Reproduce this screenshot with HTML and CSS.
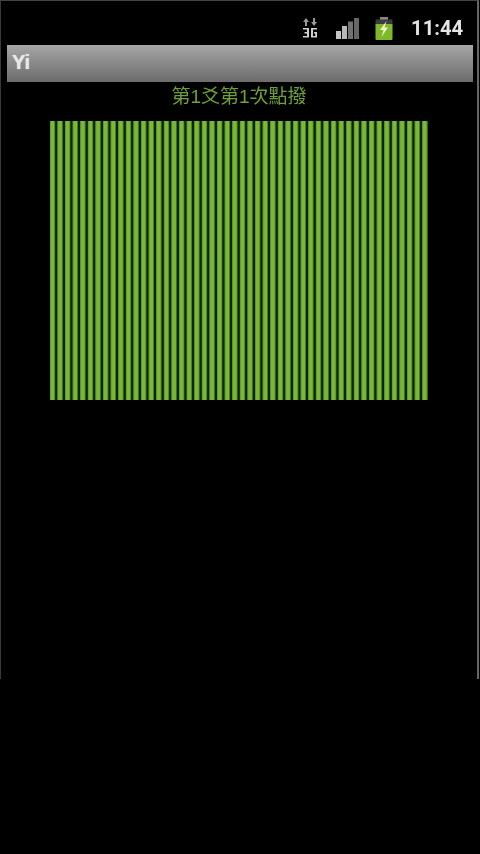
FILE: index.html
```html
<!DOCTYPE html>
<html lang="zh-Hant">
<head>
<meta charset="utf-8">
<title>Yi</title>
<link rel="stylesheet" href="styles.css">
</head>
<body>
<div class="screen">
  <div class="status">
    <svg class="ico-3g" width="16" height="20" viewBox="0 0 16 20">
      <path d="M4 0 L7 4 H5 V8 H3 V4 H1 Z M12 8 L15 4 H13 V0 H11 V4 H9 Z" fill="#9a9a9a"/>
      <path d="M1 10 H7 V19.5 H1 V18 H5 V15.5 H2.5 V14 H5 V11.5 H1 Z M9 10 H15 V11.5 H11 V18 H13.2 V15.5 H12 V14 H15 V19.5 H9 Z" fill="#cfcfcf"/>
    </svg>
    <svg class="ico-signal" width="23" height="21" viewBox="0 0 23 21">
      <rect x="0" y="13" width="5" height="8" fill="#c4c4c4"/>
      <rect x="6" y="8" width="5" height="13" fill="#b8b8b8"/>
      <rect x="12" y="3.5" width="5" height="17.5" fill="#727272"/>
      <rect x="18" y="0" width="5" height="21" fill="#666"/>
    </svg>
    <svg class="ico-batt" width="18" height="23" viewBox="0 0 18 23">
      <rect x="5" y="0" width="8" height="3" fill="#888"/>
      <rect x="0.5" y="2.5" width="17" height="6" fill="#3c3c3c"/>
      <rect x="0.5" y="7" width="17" height="16" rx="1" fill="#7fb92a"/>
      <path d="M11.5 4 L5 13 H8.5 L6.5 20 L13 10.5 H9.5 Z" fill="#f0f4d0"/>
    </svg>
    <span class="clock">11:44</span>
  </div>
  <div class="titlebar">Yi</div>
  <div class="heading">第1爻第1次點撥</div>
  <div class="bars"></div>
</div>
</body>
</html>
```
FILE: styles.css
```css
html, body {
  margin: 0;
  padding: 0;
  background: #000;
}
body {
  width: 480px;
  height: 854px;
  overflow: hidden;
  font-family: "Liberation Sans", "Noto Sans CJK TC", sans-serif;
}
.screen {
  box-sizing: border-box;
  width: 479px;
  height: 679px;
  background: #000;
  border-top: 1px solid #444;
  border-left: 1px solid #3a3a3a;
  border-right: 2px solid #666;
}
.status {
  box-sizing: border-box;
  height: 44px;
  display: flex;
  align-items: center;
  padding-top: 10px;
  padding-left: 301px;
}
.ico-signal { margin-left: 18px; }
.ico-batt { margin-left: 16px; }
.clock {
  margin-left: 18px;
  font: bold 20.3px "Roboto", "Liberation Sans", sans-serif;
  color: #e6e6e6;
  filter: blur(0.4px);
}
.titlebar {
  box-sizing: border-box;
  height: 37px;
  margin-left: 6px;
  width: 466px;
  padding-left: 5px;
  background: linear-gradient(#a6a6a6, #6c6c6c);
  color: #e8e8e8;
  font: bold 20px/35px "Liberation Sans", sans-serif;
  text-shadow: 0 0 1px #ddd;
}
.heading {
  box-sizing: border-box;
  height: 28px;
  width: 476px;
  padding-top: 2px;
  text-align: center;
  color: #6fa236;
  font-size: 19px;
  line-height: 26px;
  filter: blur(0.4px);
}
.bars {
  width: 378px;
  height: 279px;
  margin: 11px 0 0 49px;
  background: repeating-linear-gradient(90deg, #558f28 0, #7cb73a 1.2px, #7cb73a 3.8px, #356e18 5px, #0e2408 5.6px, #0e2408 7px, #558f28 7.6px);
}
```
